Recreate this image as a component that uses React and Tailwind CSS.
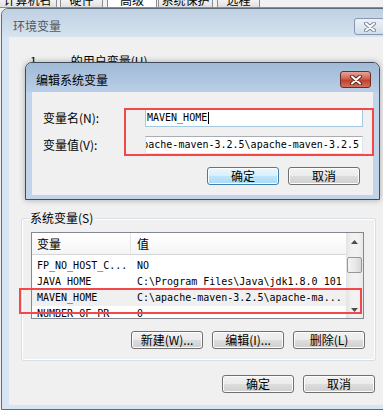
import React from 'react';

const cjk = "font-['Noto_Sans_CJK_SC',sans-serif]";
const mono = "font-['DejaVu_Sans_Mono',monospace]";

const tabs = [
  { label: '计算机名', box: '-ml-[2px] w-[59px]' },
  { label: '硬件', box: 'ml-[3px] w-[43px]' },
  { label: '高级', box: 'ml-[4px] w-[50px]', active: true },
  { label: '系统保护', box: 'ml-[1px] w-[55px]' },
  { label: '远程', box: 'ml-[4px] w-[43px]' },
];

const rows = [
  { name: 'FP_NO_HOST_C...', value: 'NO' },
  { name: 'JAVA HOME', value: 'C:\\Program Files\\Java\\jdk1.8.0 101' },
  { name: 'MAVEN_HOME', value: 'C:\\apache-maven-3.2.5\\apache-ma...', selected: true },
  { name: 'NUMBER_OF_PR', value: '0' },
];

const WinButton = ({ children, primary = false, className = '' }) => (
  <div
    className={`${cjk} flex h-[18px] w-[72px] items-center justify-center rounded-[3px] border text-[12px] leading-[12px] text-black shadow-[inset_0_0_0_1px_#fcfcfc] ${
      primary
        ? 'border-[#3c7fb1] bg-[linear-gradient(#eaf6fd_0%,#d9f0fc_50%,#bee6fd_51%,#a7d9f5_100%)]'
        : 'border-[#707070] bg-[linear-gradient(#f2f2f2_0%,#ebebeb_50%,#dddddd_51%,#cfcfcf_100%)]'
    } ${className}`}
  >
    {children}
  </div>
);

const CloseX = ({ outline }) => (
  <svg width="12" height="10" viewBox="0 0 12 10">
    <path d="M2 1.5 L10 8.5 M10 1.5 L2 8.5" stroke={outline} strokeWidth="4" strokeLinecap="round" />
    <path d="M2 1.5 L10 8.5 M10 1.5 L2 8.5" stroke="#ffffff" strokeWidth="2" strokeLinecap="round" />
  </svg>
);

const Arrow = ({ up }) => (
  <svg width="7" height="4" viewBox="0 0 7 4">
    <path d={up ? 'M0 4 L3.5 0 L7 4 Z' : 'M0 0 L3.5 4 L7 0 Z'} fill="#4d4d4d" />
  </svg>
);

const App = () => {
  return (
    <div className="relative h-[410px] w-[383px] overflow-hidden bg-[#f0f0f0]">
      {/* tab strip of the system properties window behind */}
      <div className="flex h-[8px] border-b border-[#898c95]">
        {tabs.map((t) => (
          <div
            key={t.label}
            className={`${t.box} flex h-full justify-center overflow-hidden border-x ${
              t.active ? 'border-[#898c95] bg-white' : 'border-[#8e8f8f] bg-[linear-gradient(#f2f2f2,#e0e0e0)]'
            }`}
          >
            <span className={`${cjk} -mt-[6px] block text-[12px] leading-[12px] text-black`}>{t.label}</span>
          </div>
        ))}
      </div>

      {/* 环境变量 window */}
      <div className="ml-[1px] flex h-[402px] w-[393px] flex-col rounded-t-[7px] border border-[#5d6b7c] bg-[#d7e4f2]">
        <div className="flex h-[28px] items-start rounded-t-[6px] bg-[linear-gradient(#bfd0e1,#d6e3f0)] pl-[11px]">
          <span className={`${cjk} mt-[11px] text-[12px] leading-[12px] text-[#4f5864]`}>环境变量</span>
          <div className="mr-[8px] ml-auto mt-[9px] flex h-[17px] w-[31px] items-center justify-center rounded-[3px] border border-[#8797ad] bg-[linear-gradient(#edf2f8,#d3deea)]">
            <CloseX outline="#7c8797" />
          </div>
        </div>

        <div className="mx-[7px] h-[368px] bg-[#f0f0f0] pt-[18px]">
          <div className={`${cjk} flex h-[12px] text-[12px] leading-[12px] text-black`}>
            <span className="ml-[21px]">1</span>
            <span className="ml-[34px]">的用户变量(U)</span>
          </div>

          {/* 系统变量 group */}
          <div className="relative ml-[12px] mt-[151px] h-[143px] w-[355px] rounded-[3px] border border-[#d5dfe5] px-[9px] pt-[13px] pb-[11px] shadow-[inset_0_0_0_1px_#ffffff]">
            <span className={`${cjk} absolute -top-[7px] left-[7px] bg-[#f0f0f0] px-[1px] text-[12px] leading-[12px] text-black`}>
              系统变量(S)
            </span>

            <div className="flex h-[87px] w-[333px] border border-[#828790] bg-white">
              <div className="w-[314px] overflow-hidden">
                <div className={`${cjk} flex h-[22px] border-b border-[#d5d5d5] bg-[linear-gradient(#ffffff,#f4f5f7)] text-[12px] leading-[12px] text-black`}>
                  <div className="flex w-[99px] items-center border-r border-[#e5e5e5] pl-[5px]">变量</div>
                  <div className="flex items-center pl-[6px]">值</div>
                </div>
                <div className={`${mono} pt-[3px] text-[10px] leading-[16px] text-black`}>
                  {rows.map((r) => (
                    <div key={r.name} className={`flex h-[16px] whitespace-nowrap ${r.selected ? 'bg-[#f0f0f0]' : ''}`}>
                      <div className="w-[100px] pl-[5px]">{r.name}</div>
                      <div className="pl-[5px]">{r.value}</div>
                    </div>
                  ))}
                </div>
              </div>
              <div className="flex w-[17px] flex-col bg-[linear-gradient(90deg,#e3e3e3,#f2f2f2_35%,#f2f2f2_70%,#e8e8e8)]">
                <div className="flex h-[17px] items-center justify-center">
                  <Arrow up />
                </div>
                <div className="mx-[1px] mt-[7px] h-[16px] rounded-[2px] border border-[#979797] bg-[linear-gradient(90deg,#f4f4f4,#e9e9e9_50%,#d8d8d8)]" />
                <div className="flex-1" />
                <div className="flex h-[17px] items-center justify-center">
                  <Arrow />
                </div>
              </div>
            </div>

            <div className="ml-[100px] mt-[12px] flex gap-[9px]">
              <WinButton>新建(W)...</WinButton>
              <WinButton>编辑(I)...</WinButton>
              <WinButton>删除(L)</WinButton>
            </div>
          </div>

          <div className="ml-[213px] mt-[14px] flex gap-[9px]">
            <WinButton>确定</WinButton>
            <WinButton>取消</WinButton>
          </div>
        </div>
      </div>

      {/* 编辑系统变量 dialog on top */}
      <div className="absolute left-[25px] top-[62px] flex h-[138px] w-[355px] flex-col rounded-t-[7px] border border-[#3f4c5c] bg-[#c1d4ea] shadow-[0_0_6px_rgba(0,0,0,0.3)]">
        <div className="flex h-[29px] items-start rounded-t-[6px] bg-[linear-gradient(#a0bad7,#bacee6)] pl-[10px]">
          <span className={`${cjk} mt-[11px] text-[12px] leading-[12px] text-black`}>编辑系统变量</span>
          <div className="mr-[8px] ml-auto mt-[8px] flex h-[17px] w-[31px] items-center justify-center rounded-[3px] border border-[#6e2e28] bg-[linear-gradient(#e8a596,#d0614f_45%,#c4402c_55%,#d0705c)]">
            <CloseX outline="#5a2a24" />
          </div>
        </div>
        <div className="mx-[6px] h-[103px] bg-[#f0f0f0] pt-[17px]">
          <div className="flex items-center pl-[11px]">
            <span className={`${cjk} w-[102px] text-[12px] leading-[12px] text-black`}>变量名(N):</span>
            <div className={`${mono} flex h-[18px] w-[218px] items-center border border-[#a4c9e3] border-t-[#3d7bad] bg-white pl-[1px] text-[10px] leading-[12px] text-black`}>
              MAVEN_HOME
              <span className="ml-[1px] h-[12px] w-px bg-black" />
            </div>
          </div>
          <div className="mt-[9px] flex items-center pl-[11px]">
            <span className={`${cjk} w-[102px] text-[12px] leading-[12px] text-black`}>变量值(V):</span>
            <div className={`${mono} flex h-[18px] w-[218px] items-center justify-end overflow-hidden whitespace-nowrap border border-[#e2e3ea] border-t-[#abadb3] bg-white pr-[3px] text-[10px] leading-[12px] text-black`}>
              C:\apache-maven-3.2.5\apache-maven-3.2.5
            </div>
          </div>
          <div className="ml-[175px] mt-[13px] flex gap-[9px]">
            <WinButton primary>确定</WinButton>
            <WinButton>取消</WinButton>
          </div>
        </div>
      </div>

      {/* red annotation boxes */}
      <div className="absolute left-[124px] top-[108px] h-[48px] w-[250px] border-2 border-[#f2484a]" />
      <div className="absolute left-[19px] top-[288px] h-[26px] w-[343px] border-2 border-[#f2484a]" />
    </div>
  );
};

export default App;
